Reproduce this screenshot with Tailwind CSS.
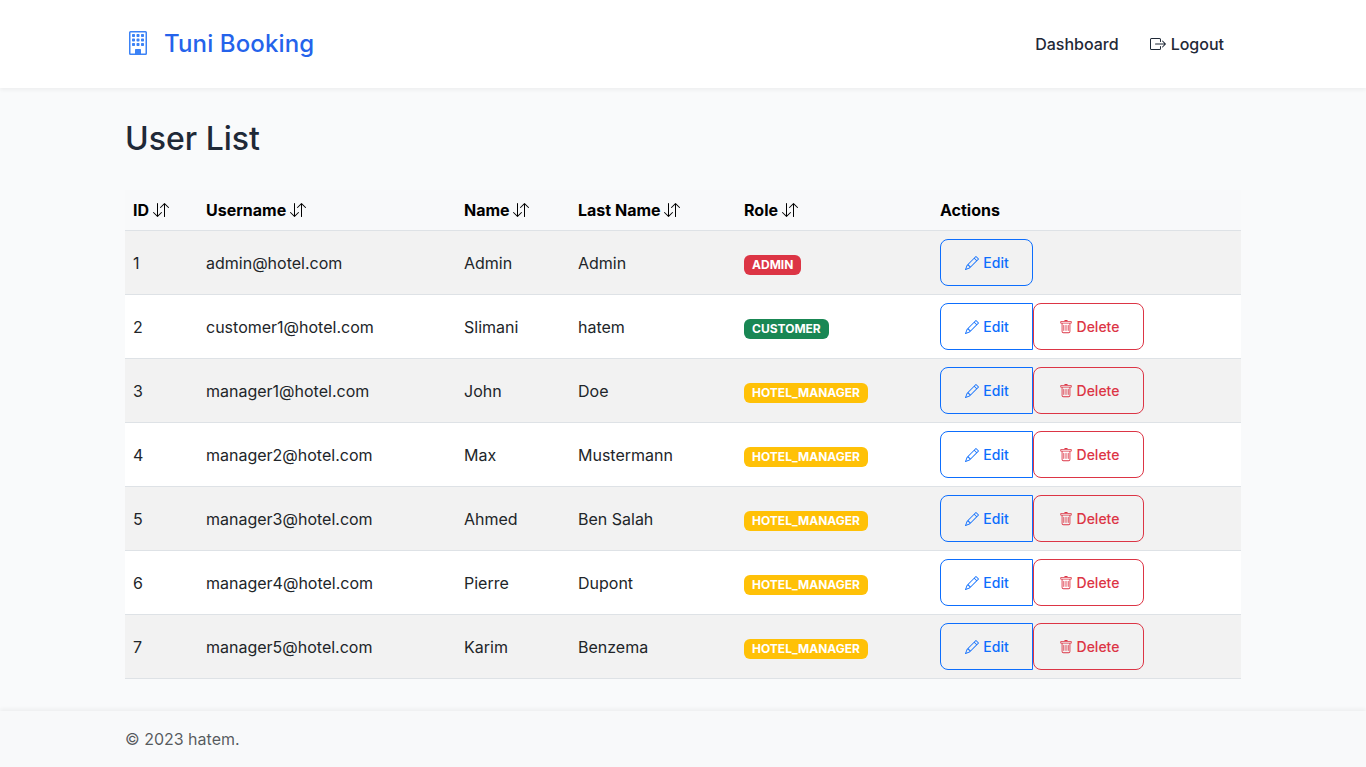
<!DOCTYPE html>
<html lang="en">
<head>
<meta charset="utf-8">
<title>Tuni Booking</title>
<script src="https://cdn.jsdelivr.net/npm/@tailwindcss/browser@4"></script>
</head>
<body class="flex h-[767px] flex-col overflow-hidden bg-[#f9fafb] font-['Inter',sans-serif] text-base text-[#212529]">
<svg class="hidden">
  <symbol id="sort" viewBox="0 0 16 16"><path d="M11.5 15a.5.5 0 0 0 .5-.5V2.707l3.146 3.147a.5.5 0 0 0 .708-.708l-4-4a.5.5 0 0 0-.708 0l-4 4a.5.5 0 1 0 .708.708L11 2.707V14.5a.5.5 0 0 0 .5.5m-7-14a.5.5 0 0 1 .5.5v11.793l3.146-3.147a.5.5 0 0 1 .708.708l-4 4a.5.5 0 0 1-.708 0l-4-4a.5.5 0 0 1 .708-.708L4 13.293V1.5a.5.5 0 0 1 .5-.5"/></symbol>
  <symbol id="pencil" viewBox="0 0 16 16"><path d="M12.146.146a.5.5 0 0 1 .708 0l3 3a.5.5 0 0 1 0 .708l-10 10a.5.5 0 0 1-.168.11l-5 2a.5.5 0 0 1-.65-.65l2-5a.5.5 0 0 1 .11-.168zM11.207 2.5 13.5 4.793 14.793 3.5 12.5 1.207zm1.586 3L10.5 3.207 4 9.707V10h.5a.5.5 0 0 1 .5.5v.5h.5a.5.5 0 0 1 .5.5v.5h.293zm-9.761 5.175-.106.106-1.528 3.821 3.821-1.528.106-.106A.5.5 0 0 1 5 12.5V12h-.5a.5.5 0 0 1-.5-.5V11h-.5a.5.5 0 0 1-.468-.325"/></symbol>
  <symbol id="trash" viewBox="0 0 16 16"><path d="M5.5 5.5A.5.5 0 0 1 6 6v6a.5.5 0 0 1-1 0V6a.5.5 0 0 1 .5-.5m2.500 0a.5.5 0 0 1 .5.5v6a.5.5 0 0 1-1 0V6a.5.5 0 0 1 .5-.5m3 .5a.5.5 0 0 0-1 0v6a.5.5 0 0 0 1 0z"/><path d="M14.5 3a1 1 0 0 1-1 1H13v9a2 2 0 0 1-2 2H5a2 2 0 0 1-2-2V4h-.5a1 1 0 0 1-1-1V2a1 1 0 0 1 1-1H6a1 1 0 0 1 1-1h2a1 1 0 0 1 1 1h3.500a1 1 0 0 1 1 1zM4.118 4 4 4.059V13a1 1 0 0 0 1 1h6a1 1 0 0 0 1-1V4.059L11.882 4zM2.500 3h11V2h-11z"/></symbol>
</svg>
<header class="h-[88px] shrink-0 bg-white shadow-[0_2px_4px_rgba(0,0,0,0.05)]">
  <div class="mx-auto flex h-full w-[1116px] items-center justify-between pr-[17px]">
    <a class="flex items-center gap-3.5 text-2xl font-medium tracking-[0.12px] text-[#2563eb]">
      <svg class="ml-px -mt-0.5 size-6 text-[#3b82f6]" viewBox="0 0 16 16" fill="currentColor"><path d="M4 2.5a.5.5 0 0 1 .5-.5h1a.5.5 0 0 1 .5.5v1a.5.5 0 0 1-.5.5h-1a.5.5 0 0 1-.5-.5zm3 0a.5.5 0 0 1 .5-.5h1a.5.5 0 0 1 .5.5v1a.5.5 0 0 1-.5.5h-1a.5.5 0 0 1-.5-.5zm3.5-.5a.5.5 0 0 0-.5.5v1a.5.5 0 0 0 .5.5h1a.5.5 0 0 0 .5-.5v-1a.5.5 0 0 0-.5-.5zM4 5.5a.5.5 0 0 1 .5-.5h1a.5.5 0 0 1 .5.5v1a.5.5 0 0 1-.5.5h-1a.5.5 0 0 1-.5-.5zM7.500 5a.5.5 0 0 0-.5.5v1a.5.5 0 0 0 .5.5h1a.5.5 0 0 0 .5-.5v-1a.5.5 0 0 0-.5-.5zm2.500.5a.5.5 0 0 1 .5-.5h1a.5.5 0 0 1 .5.5v1a.5.5 0 0 1-.5.5h-1a.5.5 0 0 1-.5-.5zM4.500 8a.5.5 0 0 0-.5.5v1a.5.5 0 0 0 .5.5h1a.5.5 0 0 0 .5-.5v-1a.5.5 0 0 0-.5-.5zm2.500.5a.5.5 0 0 1 .5-.5h1a.5.5 0 0 1 .5.5v1a.5.5 0 0 1-.5.5h-1a.5.5 0 0 1-.5-.5zm3.500-.5a.5.5 0 0 0-.5.5v1a.5.5 0 0 0 .5.5h1a.5.5 0 0 0 .5-.5v-1a.5.5 0 0 0-.5-.5z"/><path d="M2 1a1 1 0 0 1 1-1h10a1 1 0 0 1 1 1v14a1 1 0 0 1-1 1H3a1 1 0 0 1-1-1zm11 0H3v14h3v-2.500a.5.5 0 0 1 .5-.5h3a.5.5 0 0 1 .5.5V15h3z"/></svg>
      <span>Tuni Booking</span>
    </a>
    <nav class="flex items-center gap-[31px] pr-px font-medium text-[#1f2937]">
      <a>Dashboard</a>
      <a class="flex items-center gap-[5px]"><svg class="size-4" viewBox="0 0 16 16" fill="currentColor"><path d="M10 12.5a.5.5 0 0 1-.5.5h-8a.5.5 0 0 1-.5-.5v-9a.5.5 0 0 1 .5-.5h8a.5.5 0 0 1 .5.5v2a.5.5 0 0 0 1 0v-2A1.5 1.5 0 0 0 9.5 2h-8A1.5 1.5 0 0 0 0 3.5v9A1.5 1.5 0 0 0 1.5 14h8a1.5 1.5 0 0 0 1.5-1.5v-2a.5.5 0 0 0-1 0z"/><path d="M15.854 8.354a.5.5 0 0 0 0-.708l-3-3a.5.5 0 0 0-.708.708L14.293 7.5H5.5a.5.5 0 0 0 0 1h8.793l-2.147 2.146a.5.5 0 0 0 .708.708z"/></svg><span class="-mr-px">Logout</span></a>
    </nav>
  </div>
</header>
<main class="mx-auto w-[1116px] flex-1 pt-8">
  <h1 class="text-[32px] leading-[38px] font-medium text-[#1f2937]">User List</h1>
  <table class="mt-8 w-full table-fixed border-collapse">
    <colgroup><col class="w-[73px]"><col class="w-[258px]"><col class="w-[114px]"><col class="w-[166px]"><col class="w-[196px]"><col></colgroup>
    <thead class="bg-[#f8f9fa] text-black">
      <tr id="head" class="h-10 border-b border-[#dee2e6]"></tr>
    </thead>
    <tbody id="rows"></tbody>
  </table>
</main>
<footer class="h-14 shrink-0 bg-[#f8f9fa] shadow-[0_-2px_4px_rgba(0,0,0,0.05)]">
  <div class="mx-auto flex h-full w-[1116px] items-center text-[#212529]/75">© 2023 hatem.</div>
</footer>
<script>
const heads = ['ID', 'Username', 'Name', 'Last Name', 'Role', 'Actions'];
document.getElementById('head').innerHTML = heads.map(h => `<th class="px-2 pt-px text-left font-bold"><div class="flex items-center gap-[3.5px]">${h}${h === 'Actions' ? '' : '<svg class="size-4" fill="currentColor"><use href="#sort"/></svg>'}</div></th>`).join('');
const badge = { ADMIN: 'bg-[#dc3545]', CUSTOMER: 'bg-[#198754]', HOTEL_MANAGER: 'bg-[#ffc107]' };
const users = [
  ['admin@hotel.com', 'Admin', 'Admin', 'ADMIN'],
  ['customer1@hotel.com', 'Slimani', 'hatem', 'CUSTOMER'],
  ['manager1@hotel.com', 'John', 'Doe', 'HOTEL_MANAGER'],
  ['manager2@hotel.com', 'Max', 'Mustermann', 'HOTEL_MANAGER'],
  ['manager3@hotel.com', 'Ahmed', 'Ben Salah', 'HOTEL_MANAGER'],
  ['manager4@hotel.com', 'Pierre', 'Dupont', 'HOTEL_MANAGER'],
  ['manager5@hotel.com', 'Karim', 'Benzema', 'HOTEL_MANAGER']
];
document.getElementById('rows').innerHTML = users.map(([mail, first, last, role], i) => `
<tr class="h-16 border-b border-[#dee2e6] ${i % 2 ? 'bg-white' : 'bg-[#f2f2f2]'}">
  ${[i + 1, mail, first, last].map(v => `<td class="px-2 pt-px">${v}</td>`).join('')}
  <td class="px-2 pt-[5px]"><span class="flex h-5 w-fit items-center rounded-md px-2 text-xs font-bold text-white ${badge[role]}">${role}</span></td>
  <td class="px-2"><div class="flex text-sm font-medium">
    <button class="flex h-[47px] w-[93px] items-center justify-center gap-1 border border-[#0d6efd] pt-px pl-px text-[#0d6efd] ${i ? 'rounded-l-lg' : 'rounded-lg'}"><svg class="size-3.5" fill="currentColor"><use href="#pencil"/></svg>Edit</button>
    ${i ? '<button class="flex h-[47px] w-[111px] items-center justify-center gap-1 rounded-lg border border-[#dc3545] pt-px pl-px text-[#dc3545]"><svg class="size-3.5" fill="currentColor"><use href="#trash"/></svg>Delete</button>' : ''}
  </div></td>
</tr>`).join('');
</script>
</body>
</html>
